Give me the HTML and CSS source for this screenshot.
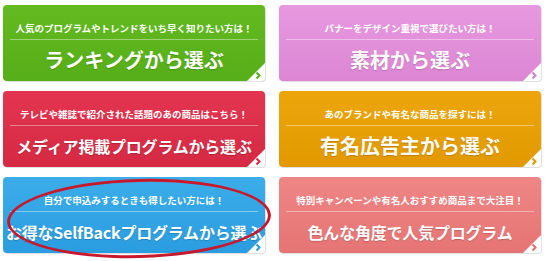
FILE: index.html
```html
<!DOCTYPE html>
<html lang="ja">
<head>
<meta charset="utf-8">
<link rel="stylesheet" href="styles.css">
</head>
<body>
<div class="grid">
  <a class="btn green">
    <span class="lead">人気のプログラムやトレンドをいち早く知りたい方は！</span>
    <span class="rule"></span>
    <span class="title">ランキングから選ぶ</span>
    <span class="corner"><svg viewBox="0 0 18 18" width="18" height="18"><path d="M0 18 L18 0 L18 18 Z" fill="#fff"/><path d="M9.5 9.5 L12.5 12.5 L9.5 15.5" fill="none" stroke="currentColor" stroke-width="2"/></svg></span>
  </a>
  <a class="btn pink">
    <span class="lead">バナーをデザイン重視で選びたい方は！</span>
    <span class="rule"></span>
    <span class="title">素材から選ぶ</span>
    <span class="corner"><svg viewBox="0 0 18 18" width="18" height="18"><path d="M0 18 L18 0 L18 18 Z" fill="#fff"/><path d="M9.5 9.5 L12.5 12.5 L9.5 15.5" fill="none" stroke="currentColor" stroke-width="2"/></svg></span>
  </a>
  <a class="btn red">
    <span class="lead">テレビや雑誌で紹介された話題のあの商品はこちら！</span>
    <span class="rule"></span>
    <span class="title long">メディア掲載プログラムから選ぶ</span>
    <span class="corner"><svg viewBox="0 0 18 18" width="18" height="18"><path d="M0 18 L18 0 L18 18 Z" fill="#fff"/><path d="M9.5 9.5 L12.5 12.5 L9.5 15.5" fill="none" stroke="currentColor" stroke-width="2"/></svg></span>
  </a>
  <a class="btn orange">
    <span class="lead">あのブランドや有名な商品を探すには！</span>
    <span class="rule"></span>
    <span class="title">有名広告主から選ぶ</span>
    <span class="corner"><svg viewBox="0 0 18 18" width="18" height="18"><path d="M0 18 L18 0 L18 18 Z" fill="#fff"/><path d="M9.5 9.5 L12.5 12.5 L9.5 15.5" fill="none" stroke="currentColor" stroke-width="2"/></svg></span>
  </a>
  <a class="btn blue">
    <span class="lead">自分で申込みするときも得したい方には！</span>
    <span class="rule"></span>
    <span class="title long">お得なSelfBackプログラムから選ぶ</span>
    <span class="corner"><svg viewBox="0 0 18 18" width="18" height="18"><path d="M0 18 L18 0 L18 18 Z" fill="#fff"/><path d="M9.5 9.5 L12.5 12.5 L9.5 15.5" fill="none" stroke="currentColor" stroke-width="2"/></svg></span>
    <span class="circle"></span>
  </a>
  <a class="btn salmon">
    <span class="lead">特別キャンペーンや有名人おすすめ商品まで大注目！</span>
    <span class="rule"></span>
    <span class="title long">色んな角度で人気プログラム</span>
    <span class="corner"><svg viewBox="0 0 18 18" width="18" height="18"><path d="M0 18 L18 0 L18 18 Z" fill="#fff"/><path d="M9.5 9.5 L12.5 12.5 L9.5 15.5" fill="none" stroke="currentColor" stroke-width="2"/></svg></span>
  </a>
</div>
</body>
</html>
```

FILE: styles.css
```css
html, body {
  margin: 0;
  padding: 0;
  background: #fff;
}
body {
  width: 550px;
  height: 261px;
  overflow: hidden;
  font-family: "Noto Sans CJK JP", "Noto Sans", sans-serif;
}
.grid {
  display: grid;
  grid-template-columns: 262px 262px;
  grid-auto-rows: 76px;
  column-gap: 14px;
  row-gap: 10px;
  padding: 5px 0 0 3px;
}
.btn {
  position: relative;
  display: flex;
  flex-direction: column;
  align-items: center;
  border-radius: 4px;
  padding: 17px 7px 0;
  color: #fff;
  box-shadow: 1px 1px 0 rgba(0, 0, 0, 0.12);
}
.lead {
  display: block;
  font-size: 9.5px;
  line-height: 12px;
  font-weight: 700;
  white-space: nowrap;
}
.rule {
  display: block;
  align-self: stretch;
  height: 1px;
  margin-top: 5px;
  background: rgba(255, 255, 255, 0.4);
}
.title {
  display: block;
  margin-top: 8px;
  font-size: 20px;
  line-height: 24px;
  font-weight: 700;
  white-space: nowrap;
  text-shadow: 0 1px 1px rgba(0, 0, 0, 0.18);
}
.title.long {
  font-size: 16px;
  letter-spacing: -0.2px;
}
.corner {
  position: absolute;
  right: 0;
  bottom: 0;
  width: 18px;
  height: 18px;
  line-height: 0;
}
.corner svg {
  border-bottom-right-radius: 3px;
}
.green  { background: linear-gradient(#63ba20, #56ae18); }
.green .corner { color: #56ae18; }
.pink   { background: linear-gradient(#e799df, #dc86d4); }
.pink .corner { color: #d27dca; }
.red    { background: linear-gradient(#e3354f, #d52944); }
.red .corner { color: #d52944; }
.orange { background: linear-gradient(#eca60c, #e29900); }
.orange .corner { color: #e29900; }
.blue   { background: linear-gradient(#3cadea, #2a9de0); }
.blue .corner { color: #2a9de0; }
.salmon { background: linear-gradient(#ef8686, #e67474); }
.salmon .corner { color: #e06c6c; }
.circle {
  position: absolute;
  left: 4px;
  top: 2px;
  width: 264px;
  height: 79px;
  border: 3px solid #c8192c;
  border-radius: 50%;
  box-sizing: border-box;
  transform: rotate(-1.5deg);
}
```
